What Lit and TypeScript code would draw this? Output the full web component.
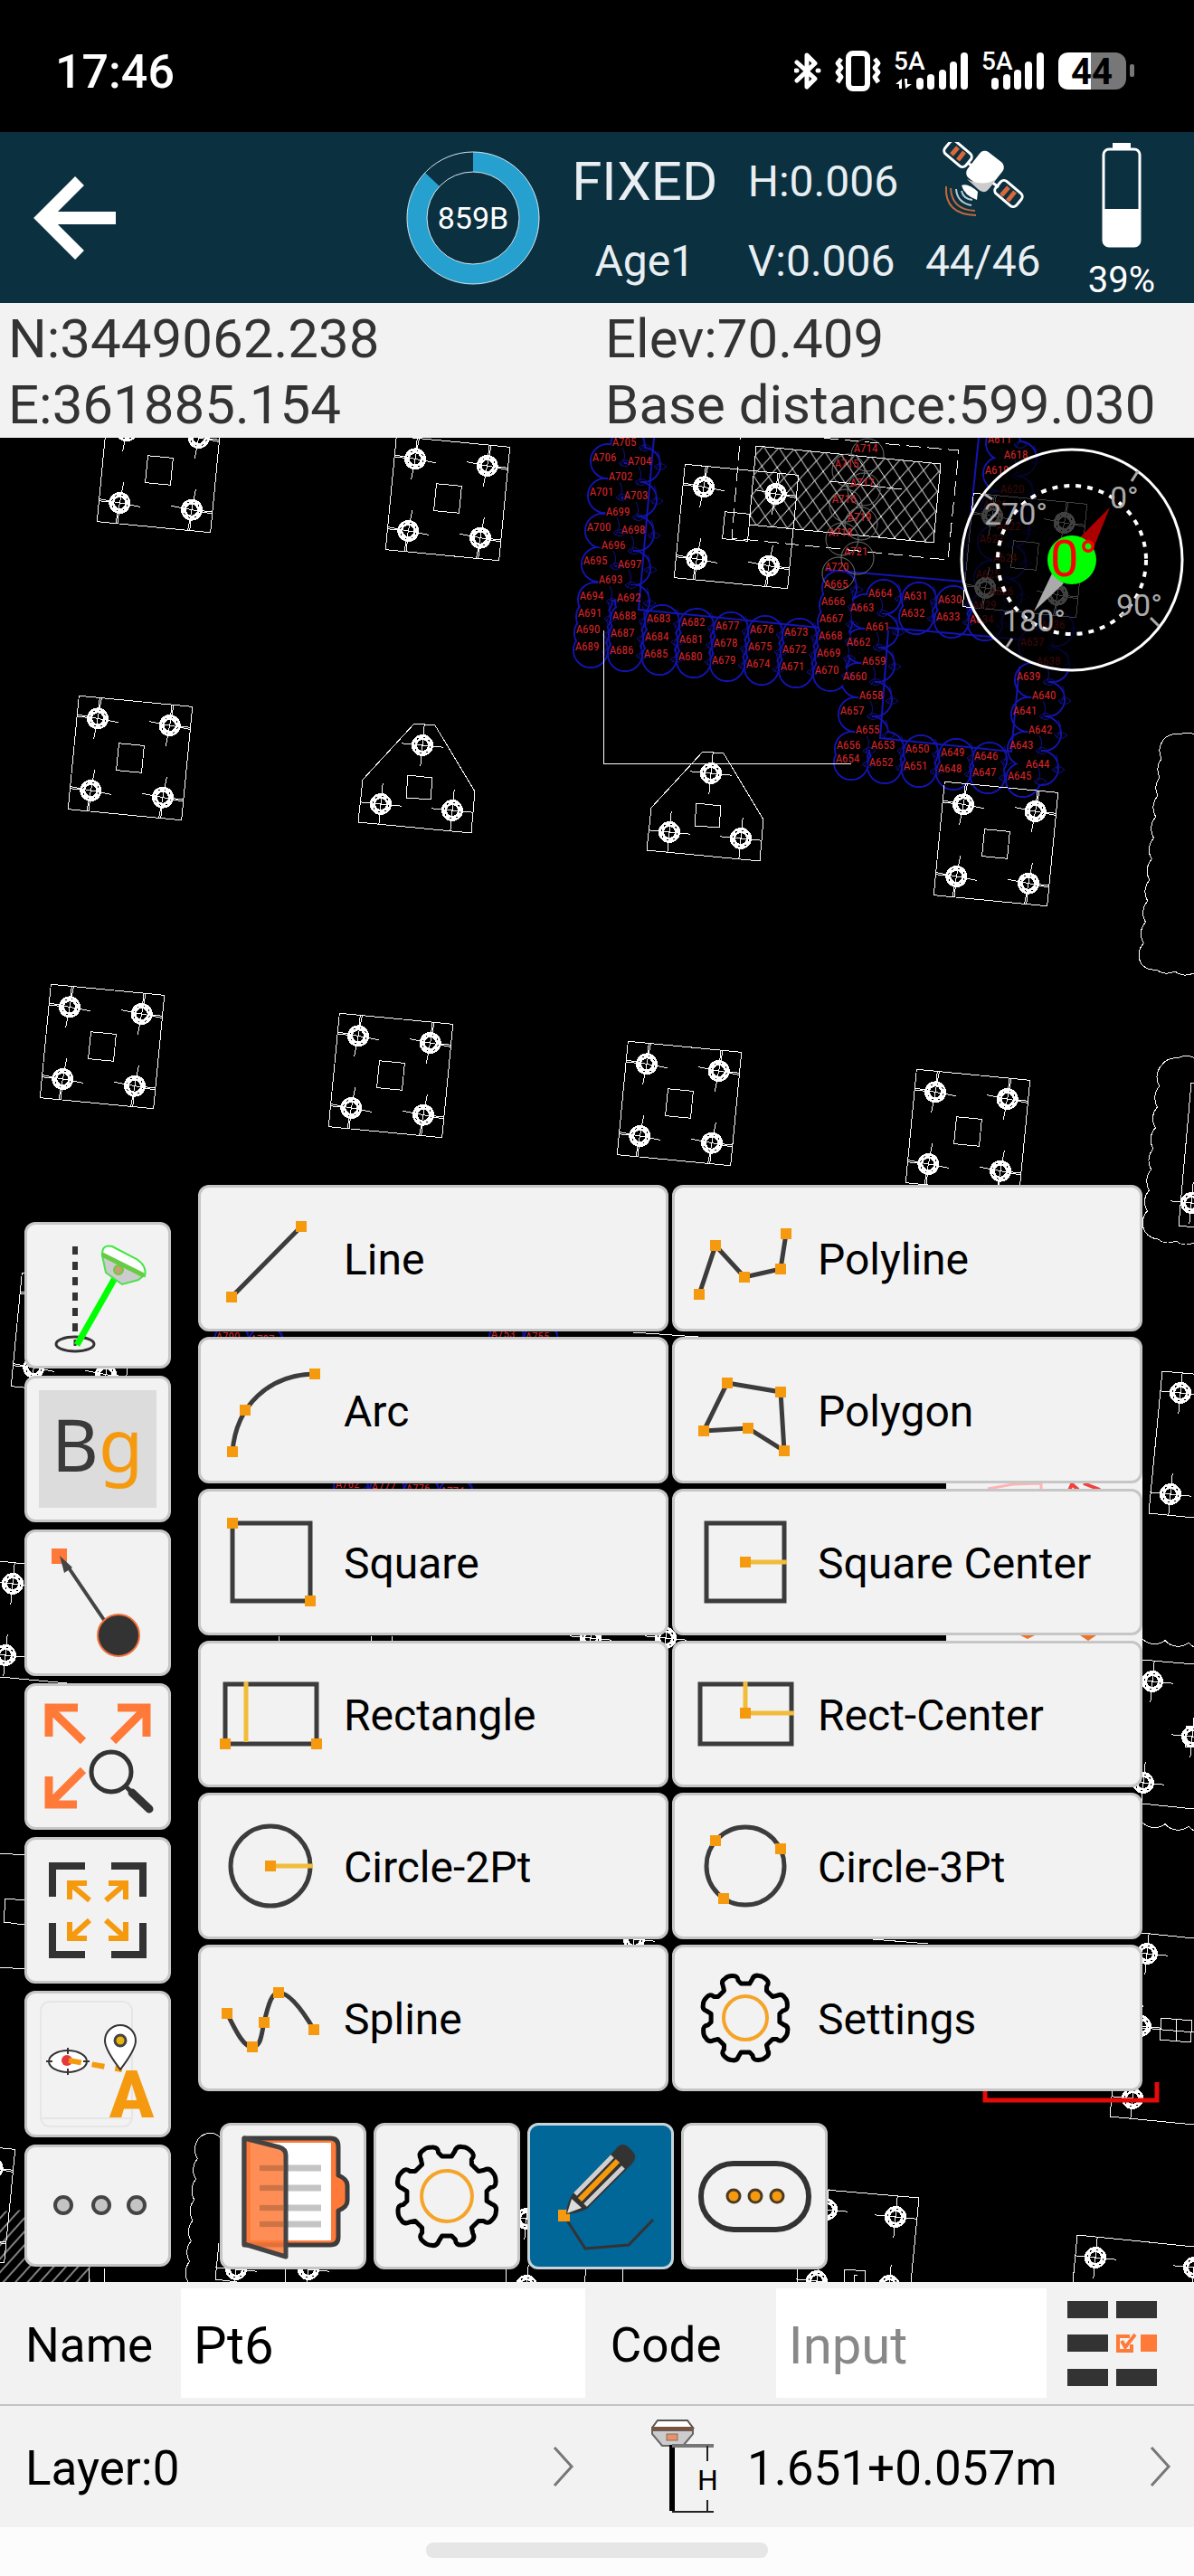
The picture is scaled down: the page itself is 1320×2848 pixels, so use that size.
import { css, html, LitElement, svg } from 'lit';
import { customElement, property, state } from 'lit/decorators.js';

type Pt = [number, number];

const BOLTS: Pt[] = [[-40, -40], [40, -40], [-40, 40], [40, 40]];

const PLATES: Pt[] = [
  [176, 520], [495, 551], [814, 582], [1133, 614],
  [144, 838], [1101, 933],
  [113, 1157], [432, 1189], [751, 1220], [1070, 1251],
  [81, 1476], [-52, 2433],
];

const CAPS: Pt[] = [[463, 870], [782, 901]];

// loose bolts whose plate is mostly outside of the view
const LOOSE_BOLTS: Pt[] = [
  [1305, 1540], [1294, 1652], [1274, 1859], [1264, 1971], [1318, 1920], [1268, 2160], [1261, 2240],
  [1252, 2320], [1211, 2496], [1320, 2507], [914, 2443], [990, 2451], [903, 2522], [983, 2527],
  [14, 1751], [6, 1830], [582, 2453], [261, 2509], [341, 2509], [736, 1811], [701, 2144], [653, 1811], [582, 2527], [1317, 1330],
];

const BLUE_PILES: [string, number, number][] = [
  ['A705', 690, 488], ['A706', 668, 505], ['A704', 707, 509], ['A702', 686, 526], ['A701', 665, 543],
  ['A703', 703, 547], ['A699', 683, 565], ['A700', 662, 582], ['A698', 700, 585], ['A696', 678, 602],
  ['A695', 658, 619], ['A697', 696, 623], ['A693', 675, 640], ['A694', 654, 658], ['A692', 695, 660],
  ['A691', 652, 677], ['A688', 690, 680], ['A690', 650, 695], ['A689', 649, 714],
  ['A683', 728, 683], ['A682', 766, 687], ['A677', 804, 691], ['A676', 842, 695], ['A673', 880, 698], ['A668', 918, 702],
  ['A687', 688, 699], ['A684', 726, 703], ['A681', 764, 706], ['A678', 802, 710], ['A675', 840, 714], ['A672', 878, 717], ['A669', 916, 721],
  ['A686', 687, 718], ['A685', 725, 722], ['A680', 763, 725], ['A679', 800, 729], ['A674', 838, 733], ['A671', 876, 736], ['A670', 914, 740],
  ['A665', 924, 645], ['A666', 921, 664], ['A667', 919, 683],
  ['A664', 973, 655], ['A631', 1012, 658], ['A630', 1050, 662], ['A663', 953, 671],
  ['A632', 1009, 677], ['A633', 1048, 681], ['A634', 1085, 684], ['A661', 970, 692], ['A662', 949, 709],
  ['A659', 966, 730], ['A660', 945, 747], ['A658', 963, 768], ['A657', 942, 785], ['A655', 959, 806],
  ['A656', 938, 823], ['A653', 976, 823], ['A650', 1014, 827], ['A649', 1053, 831], ['A646', 1090, 835],
  ['A654', 937, 838], ['A652', 974, 842], ['A651', 1012, 846], ['A648', 1050, 849], ['A647', 1088, 853],
  ['A643', 1129, 823], ['A645', 1127, 857], ['A644', 1147, 844], ['A642', 1150, 806], ['A641', 1133, 785],
  ['A640', 1154, 768], ['A639', 1137, 747], ['A638', 1159, 730], ['A637', 1141, 709], ['A636', 1164, 690],
  ['A611', 1105, 485], ['A618', 1123, 502], ['A619', 1102, 519], ['A620', 1119, 540], ['A621', 1100, 557],
  ['A622', 1115, 581], ['A623', 1096, 595], ['A624', 1111, 616], ['A625', 1092, 634], ['A626', 1107, 653], ['A629', 1088, 668],
  ['A790', 252, 1477], ['A787', 290, 1480], ['A753', 556, 1474], ['A755', 594, 1477],
  ['A762', 384, 1640], ['A777', 424, 1643], ['A776', 462, 1645], ['A774', 500, 1648],
];

const GREY_PILES: [string, number, number][] = [
  ['A714', 957, 495], ['A715', 936, 512], ['A717', 953, 533], ['A716', 933, 551],
  ['A719', 950, 571], ['A718', 929, 588], ['A721', 946, 609], ['A720', 925, 626],
];

const scallop = (points: Pt[], size = 24) => {
  let d = `M${points[0]}`;
  for (let i = 1; i < points.length; i++) {
    const [x1, y1] = points[i - 1];
    const [x2, y2] = points[i];
    const n = Math.max(1, Math.round(Math.hypot(x2 - x1, y2 - y1) / size));
    for (let k = 1; k <= n; k++) {
      const x = x1 + ((x2 - x1) * k) / n;
      const y = y1 + ((y2 - y1) * k) / n;
      d += `A${size * 0.8} ${size * 0.8} 0 0 0 ${x.toFixed(1)} ${y.toFixed(1)}`;
    }
  }
  return d;
};

const bolt = ([x, y]: Pt) => svg`
  <g transform="translate(${x} ${y}) rotate(5.5)">
    <circle class="ring" r="9"></circle>
    <circle class="ring-gap" r="9"></circle>
    <path class="thin" d="M-23 0H23M0 -23V23"></path>
  </g>`;

const plate = ([x, y]: Pt) => svg`
  <g transform="translate(${x} ${y}) rotate(5.5)">
    <path class="thin" d="M-63 -63H63V63H-63ZM-14 -15H14V15H-14Z"></path>
    <path class="thin" d="M-63 -40H-40M-63 40H-40M63 -40H40M63 40H40M-40 -63V-40M40 -63V-40M-40 63V40M40 63V40"></path>
    ${BOLTS.map((p) => bolt(p))}
  </g>`;

const cap = ([x, y]: Pt) => svg`
  <g transform="translate(${x} ${y})">
    <path class="thin" d="M-5 -70L18 -68L62 5L58 51L-67 39L-62 -8ZM-12 -13L15 -10L13 14L-14 12Z"></path>
    ${([[4, -46], [-42, 19], [37, 26]] as Pt[]).map((p) => bolt(p))}
  </g>`;

@customElement('cad-map')
export class CadMap extends LitElement {
  static styles = css`
    :host {
      display: block;
    }

    svg {
      display: block;
      width: 100%;
      height: 100%;
      background: #000;
    }

    .thin {
      fill: none;
      stroke: #fff;
      stroke-width: 1;
      shape-rendering: crispEdges;
    }

    .dash {
      stroke-dasharray: 16 7;
    }

    .ring {
      fill: #000;
      stroke: #fff;
      stroke-width: 6;
      shape-rendering: crispEdges;
    }

    .ring-gap {
      fill: none;
      stroke: #000;
      stroke-width: 1;
      stroke-dasharray: 2 5;
      shape-rendering: crispEdges;
    }

    .pile {
      fill: none;
      stroke: #1414b4;
      stroke-width: 2;
    }

    .wall {
      fill: none;
      stroke: #1414b4;
      stroke-width: 2;
    }

    .lens {
      fill: none;
      stroke: #10108c;
      stroke-width: 1;
    }

    .inside {
      fill: #000;
    }

    .grey {
      fill: none;
      stroke: #777;
      stroke-width: 1;
    }

    .tag {
      fill: #d8262b;
      font-family: 'Liberation Sans Narrow', 'Roboto Condensed', 'Liberation Sans', sans-serif;
      font-size: 13px;
      text-anchor: middle;
    }

    .frame {
      fill: none;
      stroke: #fff;
      stroke-width: 1;
      shape-rendering: crispEdges;
    }

    .range {
      fill: none;
      stroke: #e60a0a;
      stroke-width: 5;
    }

    .flag {
      fill: none;
      stroke: #f04040;
      stroke-width: 4;
    }

    .dial {
      fill: rgba(0, 0, 0, 0.75);
      stroke: #fff;
      stroke-width: 3;
    }

    .dots {
      fill: none;
      stroke: #fff;
      stroke-width: 4;
      stroke-dasharray: 6 7;
    }

    .tick {
      fill: none;
      stroke: #aaa;
      stroke-width: 3;
    }

    .degree {
      fill: #aaa;
      font-family: Roboto, 'Open Sans', sans-serif;
      font-size: 34px;
    }

    .heading {
      fill: #f00;
      font-family: Roboto, 'Open Sans', sans-serif;
      font-size: 56px;
    }
  `;

  _renderPiles() {
    return svg`
      ${BLUE_PILES.map(([, x, y]) => svg`<circle class="pile" cx=${x + 4} cy=${y + 5} r="19"></circle>`)}
      ${BLUE_PILES.map(([, x, y]) => svg`<circle class="inside" cx=${x + 4} cy=${y + 5} r="18"></circle>`)}
      ${BLUE_PILES.map(([, x, y]) => svg`<path class="lens" d="M${x + 16} ${y + 7}q7 -7 14 0q-7 7 -14 0M${x + 20} ${y - 10}q6 10 -2 20"></path>`)}
      <path class="wall" d="M723 484L706 674L906 694M914 630L1064 643M982 694L1130 707M982 697L973 816L1118 831L1127 737M1082 484L1066 640"></path>`;
  }

  _renderHatch() {
    return svg`
      <defs>
        <pattern id="mesh" width="17" height="22" patternUnits="userSpaceOnUse" patternTransform="rotate(5)">
          <path fill="none" stroke="#fff" d="M0 0L17 22M17 0L0 22"></path>
        </pattern>
        <pattern id="slope" width="10" height="10" patternUnits="userSpaceOnUse" patternTransform="rotate(42)">
          <path fill="none" stroke="#fff" d="M1 0V10"></path>
        </pattern>
      </defs>
      <path class="thin" d="M836 493L1040 513L1032 600L828 580Z"></path>
      <path fill="url(#mesh)" d="M836 493L1040 513L1032 600L828 580Z"></path>
      <path class="thin dash" d="M819 476L1060 498L1048 619L809 595Z"></path>
      <path class="thin" d="M918 532L997 541"></path>
      <path fill="url(#slope)" d="M0 2445L27 2443L100 2500V2523H0Z"></path>`;
  }

  _renderCompass() {
    return svg`
      <circle class="dial" cx="1185" cy="619" r="122"></circle>
      <circle class="dots" cx="1185" cy="619" r="82"></circle>
      <path class="tick" d="M1251 532L1258 521M1272 683L1281 692M1119 706L1113 715M1088 546L1097 552"></path>
      <path fill="#a00" d="M1194 594L1227 561L1209 606Z"></path>
      <path fill="#aaa" d="M1163 634L1143 676L1176 645Z"></path>
      <text class="degree" x="1227" y="562">0°</text>
      <text class="degree" x="1234" y="681">90°</text>
      <text class="degree" x="1108" y="698">180°</text>
      <text class="degree" x="1088" y="580">270°</text>
      <circle fill="#0f0" cx="1185" cy="619" r="27"></circle>
      <text class="heading" x="1161" y="637">0°</text>`;
  }

  render() {
    return html`
      <svg viewBox="0 484 1320 2039" preserveAspectRatio="xMidYMin slice" aria-hidden="true">
        ${this._renderPiles()}
        ${this._renderHatch()}
        ${GREY_PILES.map(([, x, y]) => svg`<circle class="grey" cx=${x + 2} cy=${y + 8} r="18"></circle>`)}
        ${PLATES.map(plate)}
        ${CAPS.map(cap)}
        ${LOOSE_BOLTS.map(bolt)}
        ${[...BLUE_PILES, ...GREY_PILES].map(([name, x, y]) => svg`<text class="tag" x=${x} y=${y + 5}>${name}</text>`)}
        <path class="frame" d="M667 697V844H941"></path>
        <path class="thin" d=${scallop([[1326, 816], [1304, 812], [1286, 818], [1280, 880], [1262, 1066]])}></path>
        <path class="thin" d=${scallop([[1262, 1066], [1278, 1072], [1340, 1078]])}></path>
        <path class="thin" d=${scallop([[1326, 1174], [1302, 1170], [1284, 1178], [1266, 1362]])}></path>
        <path class="thin" d=${scallop([[1266, 1362], [1280, 1370], [1340, 1376]])}></path>
        <path class="thin" d=${scallop([[1262, 1811], [1340, 1819]])}></path>
        <path class="thin" d=${scallop([[1262, 2014], [1340, 2022]])}></path>
        <path class="thin" d=${scallop([[246, 2366], [234, 2358], [220, 2364], [208, 2523]])}></path>
        <path class="thin" d="M1330 1198L1317 1197L1303 1355L1330 1358"></path>
        <path class="thin" d="M1330 1520L1285 1516L1270 1673L1330 1679"></path>
        <path class="thin" d="M1262 1835L1320 1840M1262 1994L1320 2000M1262 2137L1320 2143M1240 2200L1227 2340L1320 2349"></path>
        <path class="thin" d="M1284 2231L1318 2234L1316 2258L1282 2255ZM1300 2233V2256M1262 2242L1320 2247"></path>
        <path class="thin" d="M1330 1909L1312 1908L1310 1931L1330 1933"></path>
        <path class="thin" d="M890 2419L1016 2430L1007 2523M882 2509L881 2523M933 2523L934 2509L957 2511L956 2523M944 2523V2516L948 2515"></path>
        <path class="thin" d="M1330 2485L1191 2471L1186 2523M242 2480L238 2520L262 2523M315 2509V2523M559 2509V2523M648 2509L646 2523M688 2509V2523"></path>
        <path class="thin" d="M0 1726L27 1729M0 1854L85 1862M0 2049L27 2051M27 2101L6 2099L4 2125L27 2128M0 2175L27 2177"></path>
        <path class="thin" d="M98 2508V2523M115 2508V2523M230 2137H300M700 1473L800 1480M965 2144L1026 2149M308 1809V1814M410 1809V1814M433 1809V1814"></path>
        <rect fill="#f2f2f2" x="1046" y="1600" width="217" height="260"></rect>
        <path fill="none" stroke="#ffb4b4" stroke-width="3" d="M1092 1646L1120 1641L1151 1640V1647"></path>
        <path class="flag" d="M1182 1648L1185 1641L1192 1647M1198 1640L1216 1647"></path>
        <path fill="#f0712a" d="M1128 1808H1144L1136 1812ZM1194 1808H1212L1203 1814Z"></path>
        <path class="range" d="M1089 2290V2322H1279V2302"></path>
        ${this._renderCompass()}
      </svg>
    `;
  }
}

const node = (x: number, y: number) => svg`<rect class="node" x=${x - 6} y=${y - 6} width="12" height="12"></rect>`;

const nodes = (points: Pt[]) => points.map(([x, y]) => node(x, y));

const gearPath = (r: number) => {
  const at = (deg: number, k: number) => {
    const a = ((deg - 90) * Math.PI) / 180;
    return `${(81 + r * k * Math.cos(a)).toFixed(1)} ${(81 + r * k * Math.sin(a)).toFixed(1)}`;
  };
  let d = `M${at(-7, 0.78)}`;
  for (let i = 0; i < 8; i++) {
    const t = i * 45;
    d += `L${at(t + 7, 0.78)}L${at(t + 10, 0.88)}Q${at(t + 11, 1)} ${at(t + 18, 1)}`;
    d += `Q${at(t + 22, 1.03)} ${at(t + 28, 0.99)}Q${at(t + 35, 0.97)} ${at(t + 34, 0.86)}L${at(t + 38, 0.78)}`;
  }
  return `${d}Z`;
};

const gear = (r: number) => svg`
  <path class="gear" d=${gearPath(r)}></path>
  <circle class="hub" cx="81" cy="81" r=${r * 0.49}></circle>`;

const ICONS: Record<string, unknown> = {
  line: svg`<path class="ink" d="M37 124L114 46"></path>${nodes([[37, 124], [114, 46]])}`,
  polyline: svg`<path class="ink" d="M30 121L48 67L80 102L120 93L126 54"></path>
    ${nodes([[30, 121], [48, 67], [80, 102], [120, 93], [126, 54]])}`,
  arc: svg`<path class="ink" d="M38 127C42 76 78 42 129 41"></path>${nodes([[38, 127], [52, 81], [129, 41]])}`,
  polygon: svg`<path class="ink" d="M61 51L120 61L124 126L84 101L35 104Z"></path>
    ${nodes([[61, 51], [120, 61], [124, 126], [84, 101], [35, 104]])}`,
  square: svg`<path class="ink" d="M38 38H124V124H38Z"></path>${nodes([[38, 38], [124, 124]])}`,
  'square-center': svg`<path class="ink" d="M38 38H124V124H38Z"></path><path class="guide" d="M81 81H127"></path>${node(81, 81)}`,
  rectangle: svg`<path class="ink" d="M30 48H131V114H30Z"></path><path class="guide" d="M53 45V112"></path>
    ${nodes([[30, 114], [131, 114]])}`,
  'rect-center': svg`<path class="ink" d="M31 48H132V114H31Z"></path><path class="guide" d="M81 45V80H135"></path>${node(81, 80)}`,
  'circle-2pt': svg`<circle class="ink" cx="80" cy="81" r="44"></circle><path class="guide" d="M80 81H127"></path>${node(80, 81)}`,
  'circle-3pt': svg`<circle class="ink" cx="81" cy="81" r="43"></circle>${nodes([[48, 53], [120, 62], [57, 117]])}`,
  spline: svg`<path class="ink" d="M32 76C44 100 51 113 60 113C70 113 70 98 73 86C78 64 82 53 89 53C102 53 118 77 128 94"></path>
    ${nodes([[32, 76], [60, 113], [73, 86], [89, 53], [128, 94]])}`,
  settings: gear(49),
  options: gear(57),
  tilt: svg`
    <path stroke="#333" stroke-width="6" stroke-dasharray="9 8" d="M56 27V122"></path>
    <ellipse fill="none" stroke="#333" stroke-width="3" cx="56" cy="135" rx="21" ry="8"></ellipse>
    <path stroke="#333" stroke-width="3" d="M56 130V137"></path>
    <path stroke="#0f0" stroke-width="7" d="M58 136L100 62"></path>
    <path fill="#ccc" stroke="#4fe04f" stroke-width="2" d="M86 37L131 60L126 64L108 69L90 56Z"></path>
    <path fill="#fff" stroke="#3fe83f" stroke-width="2" d="M86 36Q86 24 97 27L124 41Q136 49 133 60Z"></path>
    <path stroke="#6c4" stroke-width="5" d="M86 36L132 59"></path>
    <circle fill="#c9a06a" stroke="#6c4" stroke-width="2" cx="104" cy="53" r="5"></circle>`,
  background: svg`
    <rect fill="#dcdcdc" x="16" y="16" width="130" height="130"></rect>
    <text class="glyph" x="30" y="106">B<tspan fill="#f59a0f">g</tspan></text>`,
  snap: svg`
    <rect fill="#ff7a38" x="30" y="21" width="17" height="17"></rect>
    <path stroke="#444" stroke-width="4" d="M88 100L46 38"></path>
    <path fill="#444" d="M39 29L53 42L44 48Z"></path>
    <circle fill="#333" stroke="#f0703a" stroke-width="2" cx="104" cy="117" r="23"></circle>`,
  'zoom-window': svg`
    <g fill="none" stroke="#ff7a38" stroke-width="9">
      <path d="M59 27H27V59M30 30L65 64"></path>
      <path d="M103 27H135V59M132 30L98 64"></path>
      <path d="M58 134H27V103M30 131L65 96"></path>
    </g>
    <circle fill="none" stroke="#333" stroke-width="5" cx="96" cy="98" r="22"></circle>
    <path stroke="#333" stroke-width="9" stroke-linecap="round" d="M119 121L138 139"></path>
    <path stroke="#333" stroke-width="5" d="M111 113L120 122"></path>`,
  'zoom-all': svg`
    <path fill="none" stroke="#333" stroke-width="8" d="M67 32H31V66M96 32H131V66M67 130H31V95M96 130H131V95"></path>
    <path fill="none" stroke="#f59a0f" stroke-width="6"
      d="M69 51H50V69M52 53L72 70M93 51H112V69M110 53L90 70M69 112H50V94M52 110L72 92M93 112H112V94M110 110L90 92"></path>`,
  locate: svg`
    <rect fill="none" stroke="#e6e6e6" stroke-width="2" x="18" y="12" width="101" height="138" rx="10"></rect>
    <path stroke="#e6e6e6" stroke-width="2" d="M18 141H119"></path>
    <ellipse fill="#fff" stroke="#333" stroke-width="2" cx="48" cy="78" rx="21" ry="12"></ellipse>
    <path stroke="#333" stroke-width="2" d="M48 63V70M48 86V93M24 78H31M65 78H72"></path>
    <circle fill="#e5393c" cx="47" cy="77" r="6"></circle>
    <path fill="none" stroke="#f59a0f" stroke-width="6" stroke-dasharray="14 12" d="M49 77L108 87"></path>
    <path fill="#fff" stroke="#333" stroke-width="2" d="M106 87Q89 65 89 55A17 17 0 0 1 123 55Q123 65 106 87Z"></path>
    <circle fill="#eab30d" stroke="#444" stroke-width="3" cx="106" cy="55" r="6"></circle>
    <text class="mark" x="94" y="140">A</text>`,
  more: svg`
    <g fill="#c4c4c4" stroke="#444" stroke-width="4">
      <circle cx="43" cy="81" r="9"></circle>
      <circle cx="85" cy="81" r="9"></circle>
      <circle cx="124" cy="81" r="9"></circle>
    </g>`,
  project: svg`
    <path fill="#ff7a38" stroke="#3c3c3c" stroke-width="5" stroke-linejoin="round"
      d="M27 17H122Q131 17 131 26V58Q141 62 141 69V86Q141 93 131 97V126Q131 135 122 135H27Z"></path>
    <path fill="#fff" d="M34 22H123V130H34Z"></path>
    <path stroke="#c4c4c4" stroke-width="7" d="M44 50H112M44 72H112M44 94H112M44 112H112"></path>
    <path fill="#ff7a38" fill-opacity="0.85" stroke="#444" stroke-width="5" stroke-linejoin="round"
      d="M27 17L66 27Q73 29 73 36V148L27 134Z"></path>
    <path stroke="#8f5a3c" stroke-opacity="0.4" stroke-width="6" d="M44 50H70M44 72H70M44 94H70M44 112H70"></path>`,
  draw: svg`
    <path fill="none" stroke="#333" stroke-width="3" d="M44 108L64 139L112 135L139 107"></path>
    <rect fill="#f59a0f" x="34" y="96" width="13" height="13"></rect>
    <path fill="#333" d="M97 30Q104 20 112 27L116 31Q123 38 115 46L66 95Q56 100 43 101Q44 88 49 80Z"></path>
    <path stroke="#d0d0d0" stroke-width="5" d="M94 37L53 79M106 49L64 91"></path>
    <path stroke="#f59a0f" stroke-width="6" d="M100 42L58 85"></path>
    <path fill="#ddd" d="M49 84L60 94L44 100Z"></path>`,
  menu: svg`
    <rect fill="none" stroke="#333" stroke-width="6" x="22" y="45" width="119" height="73" rx="36"></rect>
    <g fill="#f59a0f" stroke="#4a3a24" stroke-width="3">
      <circle cx="58" cy="81" r="7"></circle>
      <circle cx="82" cy="81" r="7"></circle>
      <circle cx="106" cy="81" r="7"></circle>
    </g>`,
};

@customElement('tool-button')
export class ToolButton extends LitElement {
  static styles = css`
    :host {
      display: flex;
      min-width: 0;
    }

    button {
      display: flex;
      align-items: center;
      gap: 2px;
      flex: 1;
      min-width: 0;
      padding: 0;
      border: 3px solid #c6c6c6;
      border-radius: 12px;
      background: #f2f2f2;
      color: #000;
      font-family: Roboto, 'Open Sans', sans-serif;
      font-size: 48px;
      line-height: 60px;
      text-align: left;
      white-space: nowrap;
      overflow: hidden;
    }

    span {
      padding-top: 4px;
    }

    svg {
      flex: none;
      width: 156px;
      height: 156px;
    }

    :host([short]) svg {
      height: 129px;
    }

    :host([active]) button {
      background: #016698;
      border-color: #c6d4da;
    }

    .ink {
      fill: none;
      stroke: #3c3c3c;
      stroke-width: 5;
    }

    .node {
      fill: #f59a0f;
    }

    .guide {
      fill: none;
      stroke: #f0bc3a;
      stroke-width: 5;
    }

    .gear {
      fill: none;
      stroke: #000;
      stroke-width: 5;
      stroke-linejoin: round;
    }

    .hub {
      fill: none;
      stroke: #f5a42a;
      stroke-width: 4;
    }

    .glyph {
      fill: #3a3a3a;
      font-family: 'Noto Sans', sans-serif;
      font-size: 80px;
    }

    .mark {
      fill: #f59a0f;
      font-family: Roboto, sans-serif;
      font-size: 72px;
      font-weight: 900;
    }
  `;

  @property() icon = '';

  @property() label = '';

  @property() hint = '';

  @property({ type: Boolean, reflect: true }) short = false;

  @property({ type: Boolean, reflect: true }) active = false;

  render() {
    return html`
      <button type="button" aria-label=${this.label || this.hint}>
        <svg viewBox=${this.short ? '3 17 156 129' : '3 3 156 156'} aria-hidden="true">${ICONS[this.icon]}</svg>
        ${this.label ? html`<span>${this.label}</span>` : ''}
      </button>
    `;
  }
}

const SHAPES: [string, string][] = [
  ['line', 'Line'], ['polyline', 'Polyline'],
  ['arc', 'Arc'], ['polygon', 'Polygon'],
  ['square', 'Square'], ['square-center', 'Square Center'],
  ['rectangle', 'Rectangle'], ['rect-center', 'Rect-Center'],
  ['circle-2pt', 'Circle-2Pt'], ['circle-3pt', 'Circle-3Pt'],
  ['spline', 'Spline'], ['settings', 'Settings'],
];

const SIDE_TOOLS: [string, string][] = [
  ['tilt', 'Tilt'], ['background', 'Background'], ['snap', 'Snap'],
  ['zoom-window', 'Zoom window'], ['zoom-all', 'Zoom all'], ['locate', 'Locate'],
];

const bars = (xs: number[]) => xs.map((x, i) => {
  const top = [87, 83, 78, 69, 59][i];
  return svg`<rect x=${x - 4} y=${top} width="8" height=${100 - top} rx="4"></rect>`;
});

@customElement('app-root')
export class AppRoot extends LitElement {
  static styles = css`
    :host {
      display: flex;
      flex-direction: column;
      min-height: 100vh;
      background: #fcfcfc;
      font-family: Roboto, 'Open Sans', sans-serif;
    }

    button {
      padding: 0;
      border: none;
      background: none;
      color: inherit;
      font: inherit;
    }

    svg {
      display: block;
      flex: none;
    }

    .status {
      display: flex;
      justify-content: space-between;
      align-items: center;
      height: 146px;
      padding: 12px 62px 0 61px;
      box-sizing: border-box;
      background: #000;
      color: #fff;
    }

    .clock {
      font-size: 52px;
      font-weight: 500;
    }

    .network {
      font-size: 28px;
      font-weight: 500;
    }

    .charge {
      fill: #000;
      font-size: 40px;
      font-weight: 700;
    }

    .topbar {
      display: flex;
      align-items: center;
      height: 189px;
      padding-right: 43px;
      background: #0b3040;
      color: #fff;
    }

    .back {
      margin: 0 auto 0 36px;
    }

    .gauge-text {
      fill: #fff;
      font-size: 34px;
      text-anchor: middle;
    }

    .fix {
      display: grid;
      grid-template-columns: 164px 166px 124px;
      grid-template-rows: 84px 92px;
      column-gap: 32px;
      align-items: center;
      padding-top: 12px;
      margin: 0 54px 0 34px;
      font-size: 48px;
      color: #e8eef1;
      white-space: nowrap;
    }

    .centered {
      justify-self: center;
    }

    .fix-state {
      font-size: 60px;
      justify-self: center;
    }

    .power {
      display: flex;
      flex-direction: column;
      align-items: center;
      gap: 12px;
      padding-top: 10px;
      font-size: 40px;
      line-height: 48px;
    }

    .coords {
      display: grid;
      grid-template-columns: 1fr 1fr;
      padding: 3px 0 0;
      background: #f2f2f2;
      color: #333;
      font-size: 60px;
      line-height: 73px;
      white-space: nowrap;
    }

    .coords span {
      padding-left: 9px;
    }

    .canvas {
      position: relative;
      flex: 1;
      display: flex;
      align-items: flex-end;
      gap: 30px;
      padding: 480px 57px 14px 27px;
      background: #000;
    }

    cad-map {
      position: absolute;
      inset: 0;
    }

    .side {
      position: relative;
      display: flex;
      flex-direction: column;
      gap: 8px;
      margin-bottom: 3px;
    }

    .main {
      position: relative;
      flex: 1;
      min-width: 0;
    }

    .shapes {
      display: grid;
      grid-template-columns: 1fr 1fr;
      gap: 6px 4px;
    }

    .toolbar {
      display: flex;
      gap: 8px;
      margin: 35px 0 0 24px;
    }

    .form {
      display: flex;
      align-items: center;
      padding: 7px 41px 7px 28px;
      border-bottom: 2px solid #c4c4c4;
      background: #f2f2f2;
      font-size: 53px;
    }

    .form label {
      width: 172px;
      padding-top: 4px;
      box-sizing: border-box;
      flex: none;
    }

    .form .code-label {
      width: 211px;
      padding-left: 28px;
    }

    .form input {
      flex: 414 1 0;
      min-width: 0;
      height: 121px;
      box-sizing: border-box;
      padding: 4px 14px 0;
      border: none;
      background: #fff;
      color: #000;
      font-family: inherit;
      font-size: 58px;
    }

    .form .code {
      flex-grow: 268;
    }

    .form input::placeholder {
      color: #888;
      opacity: 1;
    }

    .form button {
      margin-left: 23px;
    }

    .links {
      display: grid;
      grid-template-columns: 1fr 1fr;
      background: #f2f2f2;
    }

    .links button {
      display: flex;
      align-items: center;
      height: 134px;
      padding: 0 25px 0 28px;
      font-size: 53px;
    }

    .links span {
      padding-top: 4px;
    }

    .links .antenna {
      gap: 24px;
      padding-left: 60px;
    }

    .chevron {
      margin-left: auto;
    }

    .height-text {
      font-size: 32px;
    }

    .home {
      display: flex;
      justify-content: center;
      padding: 17px 0 20px;
    }

    .home span {
      width: 378px;
      height: 17px;
      border-radius: 8px;
      background: #e6e6e6;
    }
  `;

  @state() name = 'Pt6';

  @state() code = '';

  _renderStatus() {
    return html`
      <div class="status">
        <span class="clock">17:46</span>
        <svg width="380" height="66" viewBox="878 47 380 66" fill="#fff" aria-hidden="true">
          <path fill="none" stroke="#fff" stroke-width="5" stroke-linejoin="round" stroke-linecap="round"
            d="M881 70L901 88L892 97V62L901 71L881 90M880 79H881M904 79H905"></path>
          <rect fill="none" stroke="#fff" stroke-width="6" x="938" y="60" width="21" height="39" rx="5"></rect>
          <path fill="none" stroke="#fff" stroke-width="5" stroke-linejoin="round"
            d="M930 66L926 71L930 76L926 81L930 86L926 92M967 66L971 71L967 76L971 81L967 86L971 92"></path>
          <text class="network" x="988" y="78">5A</text>
          <path d="M990 94L997 88V99H994V94ZM1000 88H1003V94H1008L1001 99Z"></path>
          ${bars([1017, 1029, 1042, 1054, 1066])}
          <text class="network" x="1085" y="78">5A</text>
          ${bars([1100, 1113, 1125, 1137, 1150])}
          <rect fill="#777" x="1170" y="59" width="75" height="41" rx="12"></rect>
          <path d="M1206 59H1182Q1170 59 1170 71V88Q1170 100 1182 100H1206Z"></path>
          <rect fill="#777" x="1249" y="72" width="5" height="14" rx="2"></rect>
          <text class="charge" x="1184" y="94">44</text>
        </svg>
      </div>
    `;
  }

  _renderSatellite() {
    return html`
      <svg class="centered" width="90" height="88" viewBox="1044 156 90 88" aria-hidden="true">
        <g fill="none" stroke="#fff" stroke-width="3">
          <rect x="-15" y="-9" width="30" height="18" rx="5" transform="translate(1061 169) rotate(40)"></rect>
          <rect x="-15" y="-9" width="30" height="18" rx="5" transform="translate(1117 213) rotate(40)"></rect>
          <path d="M1072 179L1077 183M1098 200L1106 206"></path>
        </g>
        <path stroke="#d9683a" stroke-width="5" d="M1061 162L1054 170M1068 167L1061 176M1117 206L1109 215M1124 211L1116 221"></path>
        <rect fill="#fff" x="-16" y="-18" width="32" height="36" rx="7" transform="translate(1091 187) rotate(38)"></rect>
        <path fill="#ccc" d="M1071 197L1083 208Q1090 215 1096 207L1103 197Q1090 206 1071 197Z"></path>
        <path fill="#fff" d="M1065 204Q1072 201 1083 211L1082 220Q1068 215 1065 204Z"></path>
        <path fill="none" stroke="#b8cdd6" stroke-width="2" d="M1059 208Q1060 223 1076 226M1065 210Q1067 219 1077 220"></path>
        <path fill="none" stroke="#c0693f" stroke-width="2" d="M1048 205Q1046 236 1081 237M1053 207Q1054 231 1080 232"></path>
      </svg>`;
  }

  _renderTopbar() {
    return html`
      <header class="topbar">
        <button class="back" type="button" aria-label="Back">
          <svg width="92" height="100" viewBox="0 0 92 100" aria-hidden="true">
            <path fill="none" stroke="#fff" stroke-width="14" d="M92 50H10M52 9L11 50L52 91"></path>
          </svg>
        </button>
        <svg width="148" height="148" viewBox="-74 -74 148 148" aria-hidden="true">
          <path fill="#26a0cf" d="M0 -73A73 73 0 1 1 -53 -50L-37 -35A51 51 0 1 0 0 -51Z"></path>
          <circle fill="none" stroke="#d5e6ee" r="73"></circle>
          <circle fill="none" stroke="#d5e6ee" r="51"></circle>
          <text class="gauge-text" y="12">859B</text>
        </svg>
        <div class="fix">
          <span class="fix-state">FIXED</span>
          <span>H:0.006</span>
          ${this._renderSatellite()}
          <span class="centered">Age1</span>
          <span>V:0.006</span>
          <span class="centered">44/46</span>
        </div>
        <div class="power">
          <svg width="44" height="116" viewBox="0 0 44 116" aria-hidden="true">
            <rect fill="none" stroke="#fff" stroke-width="3" x="2" y="7" width="40" height="107" rx="6"></rect>
            <path fill="#fff" d="M12 0H32V7H12ZM2 73H42V108Q42 114 36 114H8Q2 114 2 108Z"></path>
          </svg>
          <span>39%</span>
        </div>
      </header>
    `;
  }

  _renderChevron() {
    return html`
      <svg class="chevron" width="24" height="46" viewBox="0 0 24 46" aria-hidden="true">
        <path fill="none" stroke="#777" stroke-width="3" d="M2 2L21 23L2 44"></path>
      </svg>
    `;
  }

  render() {
    return html`
      ${this._renderStatus()}
      ${this._renderTopbar()}
      <div class="coords">
        <span>N:3449062.238</span>
        <span>Elev:70.409</span>
        <span>E:361885.154</span>
        <span>Base distance:599.030</span>
      </div>
      <main class="canvas">
        <cad-map></cad-map>
        <nav class="side">
          ${SIDE_TOOLS.map(([icon, hint]) => html`<tool-button icon=${icon} hint=${hint}></tool-button>`)}
          <tool-button icon="more" hint="More" short></tool-button>
        </nav>
        <div class="main">
          <div class="shapes">
            ${SHAPES.map(([icon, label]) => html`<tool-button icon=${icon} label=${label}></tool-button>`)}
          </div>
          <div class="toolbar">
            <tool-button icon="project" hint="Project"></tool-button>
            <tool-button icon="options" hint="Options"></tool-button>
            <tool-button icon="draw" hint="Draw" active></tool-button>
            <tool-button icon="menu" hint="Menu"></tool-button>
          </div>
        </div>
      </main>
      <form class="form" @submit=${(e: Event) => e.preventDefault()}>
        <label for="name">Name</label>
        <input id="name" type="text" .value=${this.name} @input=${(e: any) => (this.name = e.target.value)}>
        <label class="code-label" for="code">Code</label>
        <input id="code" class="code" type="text" placeholder="Input" .value=${this.code} @input=${(e: any) => (this.code = e.target.value)}>
        <button type="button" aria-label="Code list">
          <svg width="99" height="94" viewBox="0 0 99 94" aria-hidden="true">
            <path fill="#333" d="M0 0H45V19H0ZM54 0H99V19H54ZM0 37H45V56H0ZM0 75H45V94H0ZM54 75H99V94H54Z"></path>
            <rect fill="#ff7a38" x="81" y="37" width="18" height="19"></rect>
            <path fill="none" stroke="#ff7a38" stroke-width="4" d="M69 39H56V55H71V48M60 44L64 51L75 37"></path>
          </svg>
        </button>
      </form>
      <div class="links">
        <button type="button"><span>Layer:0</span>${this._renderChevron()}</button>
        <button class="antenna" type="button">
          <svg width="82" height="104" viewBox="720 2678 82 104" aria-hidden="true">
            <path fill="#ccc" stroke="#666" stroke-width="2" d="M721 2690H766V2694L755 2707H732L721 2694Z"></path>
            <path fill="#fff" stroke="#555" stroke-width="2" d="M721 2687L727 2679H760L766 2687Z"></path>
            <path stroke="#7a5440" stroke-width="4" d="M720 2688H767"></path>
            <rect fill="#e8936a" stroke="#8a6a5a" x="737" y="2694" width="12" height="7"></rect>
            <path stroke="#000" stroke-width="6" d="M743 2706V2779"></path>
            <path stroke="#777" stroke-width="4" d="M743 2707H789"></path>
            <path fill="none" stroke="#222" stroke-width="2" d="M743 2780H789M782 2707V2724M782 2767V2780"></path>
            <text class="height-text" x="771" y="2756">H</text>
          </svg>
          <span>1.651+0.057m</span>
          ${this._renderChevron()}
        </button>
      </div>
      <div class="home"><span></span></div>
    `;
  }
}
